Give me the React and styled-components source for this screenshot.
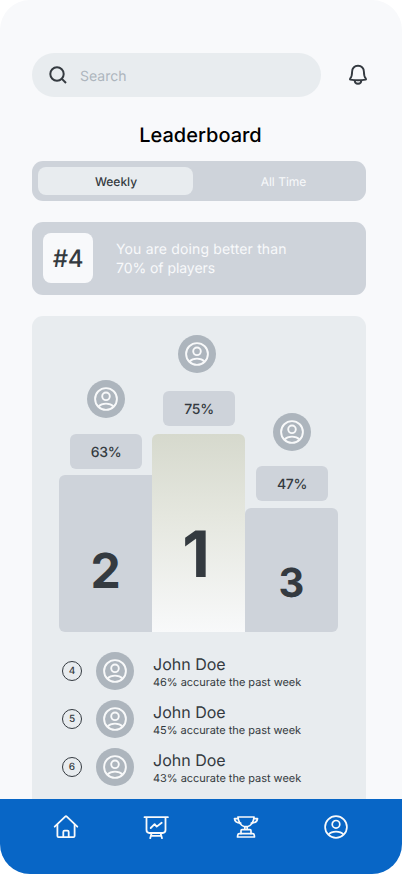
import React from "react";
import styled, { createGlobalStyle } from "styled-components";

const GlobalStyle = createGlobalStyle`
  *, *::before, *::after { box-sizing: border-box; }
  body {
    margin: 0;
    background: #fff;
    font-family: Inter, sans-serif;
    color: #343a40;
    text-rendering: geometricPrecision;
    -webkit-font-smoothing: antialiased;
  }
  h1, p { margin: 0; }
  svg { display: block; flex: none; }
  button, input { text-rendering: inherit; }
  button { font: inherit; border: 0; padding: 0; background: none; }
`;

const Screen = styled.div`
  width: 402px;
  height: 874px;
  border-radius: 30px;
  overflow: hidden;
  background: #f8f9fb;
  display: flex;
  flex-direction: column;
`;

const Content = styled.main`
  flex: 1;
  min-height: 0;
  overflow: hidden;
  padding: 53px 36px 0 32px;
  display: flex;
  flex-direction: column;
`;

const TopBar = styled.header`
  display: flex;
  align-items: center;
  justify-content: space-between;
  height: 44px;
  flex: none;
  margin-right: -5px;
`;

const SearchBox = styled.div`
  width: 289px;
  height: 44px;
  border-radius: 22px;
  background: #e8ecef;
  display: flex;
  align-items: center;
  gap: 9px;
  padding-left: 13px;
`;

const SearchInput = styled.input`
  border: 0;
  outline: 0;
  background: none;
  padding: 4px 0 0;
  width: 200px;
  font: 400 14px/20px Inter, sans-serif;
  color: #343a40;
  &::placeholder { color: #adb5bd; opacity: 1; }
`;

const Title = styled.h1`
  font-size: 20px;
  font-weight: 500;
  line-height: 24px;
  color: #000;
  text-align: center;
  margin: 26px 0 14px;
  padding-left: 3px;
  flex: none;
`;

const Tabs = styled.div`
  display: flex;
  height: 40px;
  flex: none;
  padding: 6px;
  border-radius: 11px;
  background: #ced3da;
`;

const Tab = styled.button`
  width: ${(p) => (p.$active ? "155px" : "auto")};
  flex: ${(p) => (p.$active ? "none" : "1")};
  height: 28px;
  padding: 2px 0 0 ${(p) => (p.$active ? "1px" : "14px")};
  border-radius: 8px;
  font-size: 12px;
  line-height: 18px;
  font-weight: ${(p) => (p.$active ? 500 : 400)};
  background: ${(p) => (p.$active ? "#e8ecef" : "transparent")};
  color: ${(p) => (p.$active ? "#343a40" : "#f8f9fa")};
`;

const RankBanner = styled.section`
  display: flex;
  align-items: center;
  gap: 23px;
  height: 73px;
  flex: none;
  margin-top: 21px;
  padding: 0 11px 1px;
  border-radius: 11px;
  background: #ced3da;
`;

const RankTile = styled.div`
  width: 50px;
  height: 50px;
  border-radius: 8px;
  background: #f8f9fb;
  display: flex;
  align-items: center;
  justify-content: center;
  font-size: 24px;
  font-weight: 500;
  letter-spacing: -0.4px;
`;

const RankText = styled.p`
  font-size: 14px;
  line-height: 19px;
  padding-top: 2px;
  color: #f8f9fa;
`;

const RankLine = styled.span`
  display: block;
  letter-spacing: ${(p) => p.$tracking}px;
`;

const Board = styled.section`
  flex: 1;
  margin-top: 21px;
  border-radius: 11px 11px 0 0;
  background: #e8ecef;
`;

const Podium = styled.div`
  height: 316px;
  padding-left: 27px;
  display: flex;
  align-items: flex-end;
`;

const Place = styled.div`
  width: 93px;
  display: flex;
  flex-direction: column;
  align-items: center;
`;

const Avatar = styled.div`
  width: 38px;
  height: 38px;
  flex: none;
  border-radius: 50%;
  background: #adb5bd;
  display: flex;
  align-items: center;
  justify-content: center;
  margin: 0 ${(p) => p.$nudge || "0"} ${(p) => p.$gap || 0}px 0;
`;

const Score = styled.div`
  width: 72px;
  height: 35px;
  margin: 0 0 ${(p) => p.$gap}px 1px;
  padding-top: 2px;
  border-radius: 6px;
  background: #ced3da;
  display: flex;
  align-items: center;
  justify-content: center;
  font-size: 14px;
  line-height: 17px;
  font-weight: 500;
  letter-spacing: -0.3px;
`;

const Step = styled.div`
  width: 93px;
  height: ${(p) => p.$height}px;
  border-radius: ${(p) => p.$radius};
  background: ${(p) => (p.$first ? "linear-gradient(#d6d9cd 0%, #e5e7df 42%, #f8f9fa 100%)" : "#ced3da")};
  display: flex;
  align-items: flex-end;
  justify-content: center;
  padding: 0 ${(p) => p.$shift}px ${(p) => p.$bottom}px 0;
  font-size: ${(p) => p.$size}px;
  line-height: 1;
  font-weight: 700;
`;

const Rows = styled.div`
  padding: 20px 0 0 30px;
  display: flex;
  flex-direction: column;
  gap: 10px;
`;

const Row = styled.div`
  height: 38px;
  display: flex;
  align-items: center;
`;

const Position = styled.div`
  width: 20px;
  height: 20px;
  margin-right: 14px;
  padding-top: 1px;
  border: 1px solid #343a40;
  border-radius: 50%;
  display: flex;
  align-items: center;
  justify-content: center;
  font-size: 10px;
  line-height: 17px;
  font-weight: 500;
`;

const Player = styled.div`
  margin-left: 19px;
  padding-top: 2px;
`;

const PlayerName = styled.p`
  font-size: 16px;
  line-height: 20px;
`;

const PlayerNote = styled.p`
  font-size: 11px;
  line-height: 16px;
  letter-spacing: -0.04px;
`;

const NavBar = styled.nav`
  height: 75px;
  flex: none;
  background: #0866c6;
  color: #f8f9fa;
  display: flex;
  justify-content: center;
  padding: 15px 1px 0 0;
`;

const NavButton = styled.button`
  width: 90px;
  height: 26px;
  color: inherit;
  display: flex;
  align-items: center;
  justify-content: center;
`;

const Icon = ({ size = 26, stroke = 1.8, children }) => (
  <svg width={size} height={size} viewBox="0 0 26 26" fill="none" stroke="currentColor" strokeWidth={stroke} strokeLinecap="round" strokeLinejoin="round">
    {children}
  </svg>
);

const PersonIcon = ({ color = "currentColor", stroke = 1.9 }) => (
  <svg width="26" height="26" viewBox="0 0 26 26" fill="none" stroke={color} strokeWidth={stroke}>
    <circle cx="13" cy="13" r="10.9" />
    <circle cx="13" cy="10.3" r="3.8" />
    <path d="M5.4 20.6C7.2 18.6 9.9 17.6 13 17.6s5.8 1 7.600 3" />
  </svg>
);

const SearchIcon = () => (
  <Icon stroke={2}>
    <circle cx="12" cy="12" r="6.7" />
    <path d="M16.9 16.9L21 21" strokeLinecap="butt" />
  </Icon>
);

const BellIcon = () => (
  <Icon stroke={1.9}>
    <path d="M13 3.8C9.3 3.8 7.1 6.4 7.1 9.8c0 3.8-.5 5.3-2 6.9-.3.4-.2.8.3.9 4.9.9 10.3.9 15.2 0 .5-.1.6-.5.3-.9-1.5-1.6-2-3.1-2-6.9C18.9 6.4 16.7 3.8 13 3.8Z" />
    <path d="M9.7 18.6c0 2 1.4 3.2 3.3 3.2s3.3-1.2 3.3-3.2" />
  </Icon>
);

const HomeIcon = () => (
  <Icon>
    <path d="M1.7 12.7L12.2 2.6c.5-.5 1.1-.5 1.6 0l10.5 10.1" />
    <path d="M4.4 10.6v11.4c0 .7.5 1.2 1.2 1.2h14.8c.7 0 1.2-.5 1.2-1.2V10.6" />
    <path d="M10.3 23.2v-5.3c0-.7.5-1.2 1.2-1.2h3c.7 0 1.2.5 1.2 1.2v5.3" />
  </Icon>
);

const ChartIcon = () => (
  <Icon>
    <path d="M1.5 3.2h23.4M3.5 3.2v12.9c0 1.7 1.2 2.9 2.9 2.9h13.2c1.700 0 2.9-1.2 2.9-2.9V3.2" />
    <path d="M8.600 19.2L7.200 24.200M17.600 19.200l1.400 5M8 21.900h10.200" />
    <path d="M7.700 14l3.900-3.900 2.100 2.500 5-3.900" />
  </Icon>
);

const TrophyIcon = () => (
  <Icon stroke={1.7}>
    <path d="M4.9 3h16.2c-.6 5-3 8.7-6.7 9.7h-2.800C7.900 11.700 5.500 8 4.900 3Z" />
    <path d="M5.100 4.600H1.500c.2 2.700 2.400 4.300 6.200 4.500M20.900 4.600h3.600c-.2 2.700-2.400 4.300-6.200 4.500" />
    <path d="M11.800 12.900v2.800M14.200 12.900v2.800M8 19.600v-2.900c0-.6.4-1 1-1h8c.6 0 1 .4 1 1v2.900" />
    <path d="M6.300 19.700h13.400c.9 0 1.400.5 1.500 1.200l.3 2.100h-17l.3-2.100c.1-.7.6-1.200 1.500-1.200Z" />
  </Icon>
);

const PLACES = [
  { n: 2, score: "63%", height: 157, scoreGap: 6, avatarGap: 16, nudge: "-1px", radius: "6px 0 0 6px", size: 48, bottom: 37, shift: 0 },
  { n: 1, score: "75%", height: 198, scoreGap: 8, avatarGap: 18, nudge: "3px", radius: "6px 6px 0 0", size: 64, bottom: 45, shift: 5 },
  { n: 3, score: "47%", height: 124, scoreGap: 7, avatarGap: 15, nudge: "-1px", radius: "6px 6px 6px 0", size: 40, bottom: 29, shift: 0 },
];

const PLAYERS = [
  { position: 4, score: 46 },
  { position: 5, score: 45 },
  { position: 6, score: 43 },
];

export default function App() {
  return (
    <>
      <GlobalStyle />
      <Screen>
        <Content>
          <TopBar>
            <SearchBox>
              <SearchIcon />
              <SearchInput placeholder="Search" aria-label="Search" />
            </SearchBox>
            <BellIcon />
          </TopBar>
          <Title>Leaderboard</Title>
          <Tabs>
            <Tab $active>Weekly</Tab>
            <Tab>All Time</Tab>
          </Tabs>
          <RankBanner>
            <RankTile>#4</RankTile>
            <RankText>
              <RankLine $tracking={0.15}>You are doing better than </RankLine>
              <RankLine $tracking={-0.05}>70% of players</RankLine>
            </RankText>
          </RankBanner>
          <Board>
            <Podium>
              {PLACES.map((p) => (
                <Place key={p.n}>
                  <Avatar $gap={p.avatarGap} $nudge={p.nudge}>
                    <PersonIcon color="#f8f9fa" />
                  </Avatar>
                  <Score $gap={p.scoreGap}>{p.score}</Score>
                  <Step $height={p.height} $radius={p.radius} $first={p.n === 1} $size={p.size} $bottom={p.bottom} $shift={p.shift}>
                    {p.n}
                  </Step>
                </Place>
              ))}
            </Podium>
            <Rows>
              {PLAYERS.map((p) => (
                <Row key={p.position}>
                  <Position>{p.position}</Position>
                  <Avatar>
                    <PersonIcon color="#f8f9fa" />
                  </Avatar>
                  <Player>
                    <PlayerName>John Doe</PlayerName>
                    <PlayerNote>{p.score}% accurate the past week</PlayerNote>
                  </Player>
                </Row>
              ))}
            </Rows>
          </Board>
        </Content>
        <NavBar>
          <NavButton aria-label="Home"><HomeIcon /></NavButton>
          <NavButton aria-label="Progress"><ChartIcon /></NavButton>
          <NavButton aria-label="Leaderboard"><TrophyIcon /></NavButton>
          <NavButton aria-label="Profile"><PersonIcon stroke={1.7} /></NavButton>
        </NavBar>
      </Screen>
    </>
  );
}
